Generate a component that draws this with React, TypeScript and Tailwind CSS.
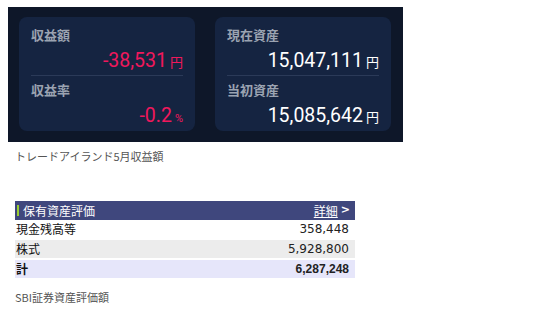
import React from 'react';

type Item = { label: string; value: string; unit: string; tone: 'pink' | 'white' };

const cards: Item[][] = [
  [
    { label: '収益額', value: '-38,531', unit: '円', tone: 'pink' },
    { label: '収益率', value: '-0.2', unit: '%', tone: 'pink' },
  ],
  [
    { label: '現在資産', value: '15,047,111', unit: '円', tone: 'white' },
    { label: '当初資産', value: '15,085,642', unit: '円', tone: 'white' },
  ],
];

const rows = [
  { name: '現金残高等', amount: '358,448', bg: 'bg-white', bold: false },
  { name: '株式', amount: '5,928,800', bg: 'bg-[#ececec]', bold: false },
  { name: '計', amount: '6,287,248', bg: 'bg-[#e6e6fa]', bold: true },
];

const jp = "font-['Noto_Sans_CJK_JP',sans-serif]";

function Stat({ item }: { item: Item }) {
  const color = item.tone === 'pink' ? 'text-[#f0185c]' : 'text-white';
  return (
    <div>
      <div className={`h-[20px] leading-[20px] text-[13px] font-bold text-[#9ba3b1] ${jp}`}>{item.label}</div>
      <div className={`mt-[2px] flex h-[27px] items-baseline justify-end ${color}`}>
        <span className="font-['Roboto',sans-serif] text-[19.5px] leading-[27px]">{item.value}</span>
        <span
          className={`ml-[3px] leading-[27px] ${item.unit === '%' ? "font-['Roboto',sans-serif] text-[11px]" : `${jp} text-[13px]`}`}
        >
          {item.unit}
        </span>
      </div>
    </div>
  );
}

export default function App() {
  return (
    <div className={`pl-[8px] pt-[7px] ${jp}`}>
      <div className="flex h-[135px] w-[395px] gap-[20px] bg-[#0e1729] pl-[11px] pt-[10px]">
        {cards.map((pair, i) => (
          <div key={i} className="h-[114px] w-[176px] rounded-[8px] bg-[#152441] px-[12px] pt-[8px]">
            <Stat item={pair[0]} />
            <div className="mb-[4px] mt-[1px] h-px bg-[#2b3a58]" />
            <Stat item={pair[1]} />
          </div>
        ))}
      </div>

      <p className="ml-[7px] mt-[7px] text-[11px] leading-[14px] text-[#555]">トレードアイランド5月収益額</p>

      <div className="ml-[7px] mt-[38px] w-[340px]">
        <div className="flex h-[19px] items-center bg-[#3f477d] pl-[2px] pr-[5px] text-[12px] text-white">
          <span className="mr-[4px] h-[11px] w-[2px] bg-[#9acd32]" />
          <span className="flex-1">保有資産評価</span>
          <span className="underline">詳細</span>
          <span className="ml-[3px] font-['DejaVu_Sans',sans-serif] text-[11px] font-bold">&gt;</span>
        </div>
        <div className="flex flex-col gap-[2px]">
          {rows.map(r => (
            <div key={r.name} className={`flex h-[18px] items-center justify-between pl-[1px] pr-[6px] ${r.bg}`}>
              <span className={`text-[12px] text-[#111] ${r.bold ? 'font-bold' : ''}`}>{r.name}</span>
              <span
                className={
                  r.bold
                    ? "font-['Liberation_Sans',sans-serif] text-[12px] font-bold text-[#222]"
                    : "font-['DejaVu_Sans',sans-serif] text-[12px] text-[#222]"
                }
              >
                {r.amount}
              </span>
            </div>
          ))}
        </div>
      </div>

      <p className="ml-[7px] mt-[12px] text-[11px] leading-[14px] text-[#555]">SBI証券資産評価額</p>
    </div>
  );
}
